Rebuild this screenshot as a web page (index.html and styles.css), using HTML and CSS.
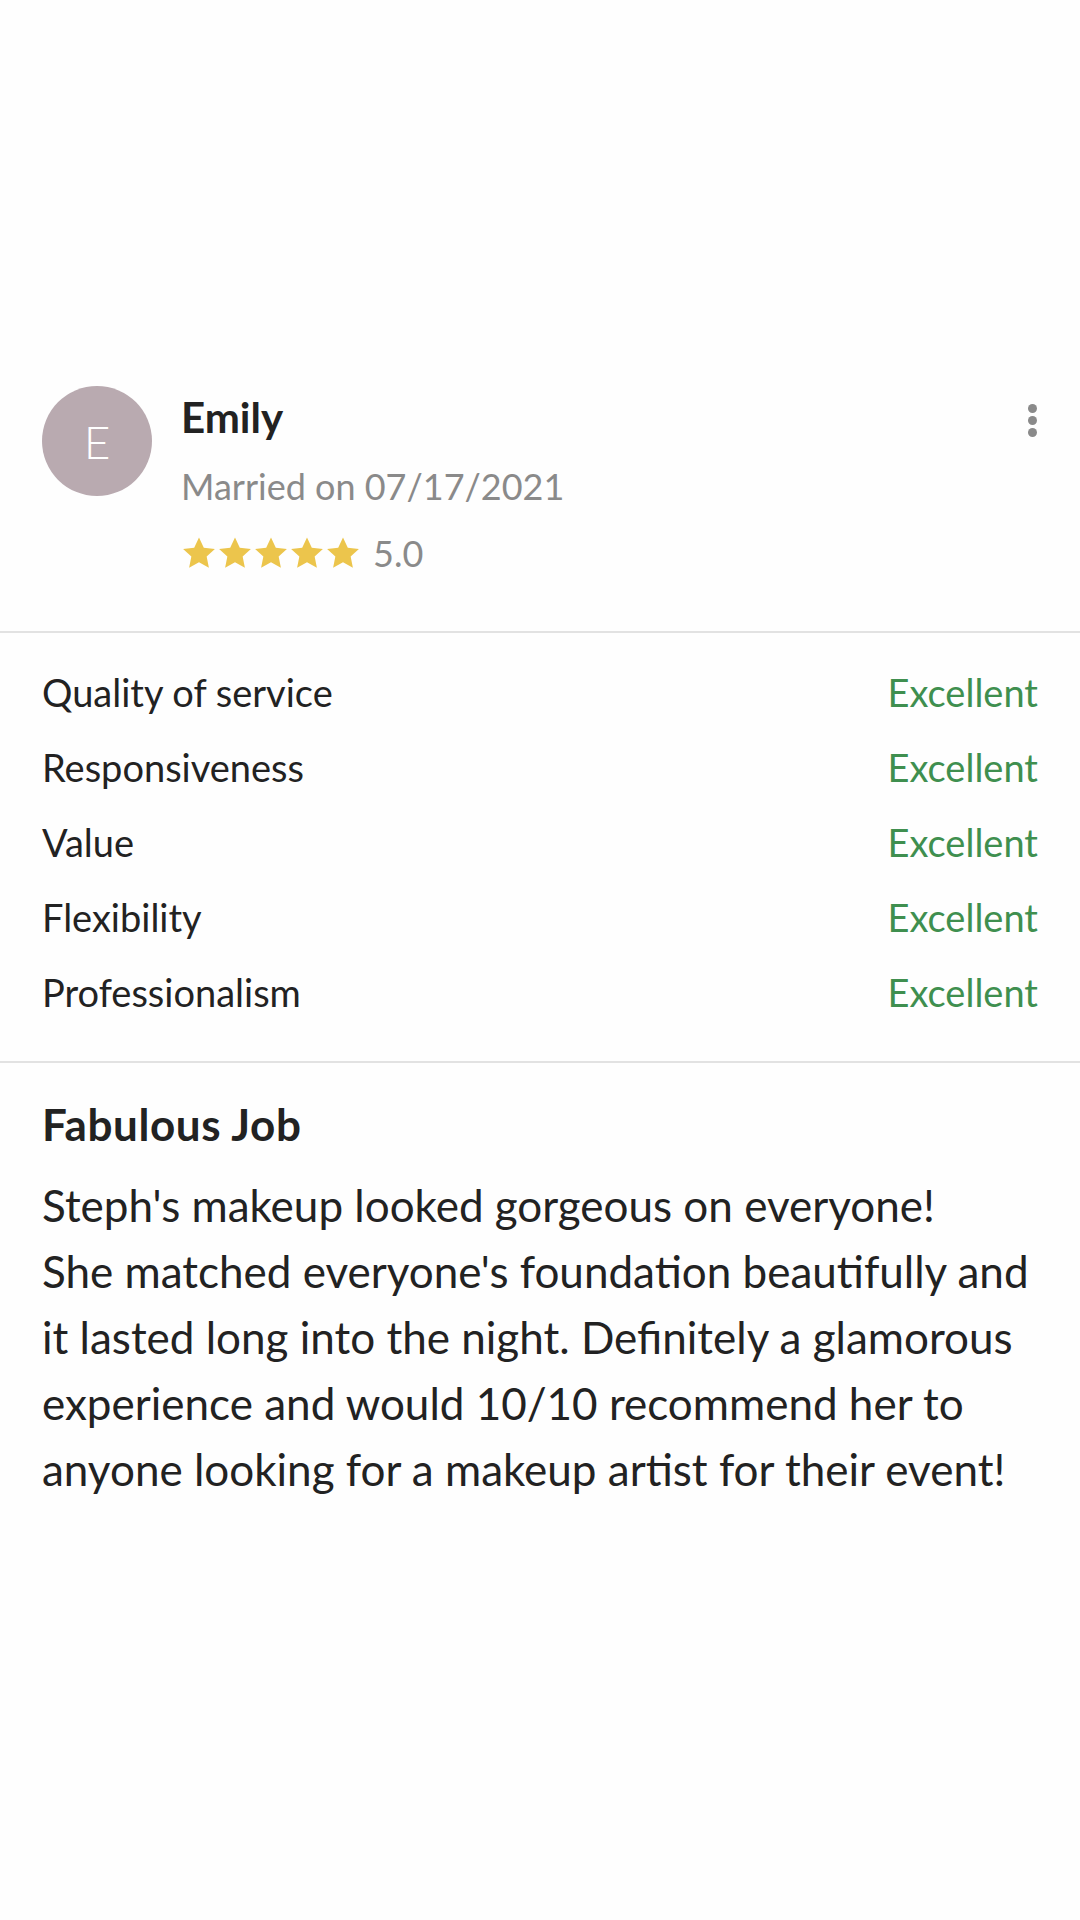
FILE: index.html
```html
<!DOCTYPE html>
<html lang="en">
<head>
<meta charset="utf-8">
<title>Review</title>
<link rel="stylesheet" href="styles.css">
</head>
<body>
<main class="review">
  <header class="reviewer">
    <div class="avatar">E</div>
    <div class="who">
      <div class="name">Emily</div>
      <div class="married">Married on 07/17/2021</div>
      <div class="rating">
        <div class="stars">
          <svg viewBox="0 0 24 24" class="star"><path d="M12 1.6l3.2 6.9 7.4.8-5.5 5.1 1.5 7.4L12 18.1 5.4 21.8l1.5-7.4L1.4 9.3l7.4-.8z"/></svg>
          <svg viewBox="0 0 24 24" class="star"><path d="M12 1.6l3.2 6.9 7.4.8-5.5 5.1 1.5 7.4L12 18.1 5.4 21.8l1.5-7.4L1.4 9.3l7.4-.8z"/></svg>
          <svg viewBox="0 0 24 24" class="star"><path d="M12 1.6l3.2 6.9 7.4.8-5.5 5.1 1.5 7.4L12 18.1 5.4 21.8l1.5-7.4L1.4 9.3l7.4-.8z"/></svg>
          <svg viewBox="0 0 24 24" class="star"><path d="M12 1.6l3.2 6.9 7.4.8-5.5 5.1 1.5 7.4L12 18.1 5.4 21.8l1.5-7.4L1.4 9.3l7.4-.8z"/></svg>
          <svg viewBox="0 0 24 24" class="star"><path d="M12 1.6l3.2 6.9 7.4.8-5.5 5.1 1.5 7.4L12 18.1 5.4 21.8l1.5-7.4L1.4 9.3l7.4-.8z"/></svg>
        </div>
        <span class="score">5.0</span>
      </div>
    </div>
    <div class="menu" aria-label="More options">
      <span class="dot"></span><span class="dot"></span><span class="dot"></span>
    </div>
  </header>

  <section class="ratings">
    <div class="row"><span class="label">Quality of service</span><span class="value">Excellent</span></div>
    <div class="row"><span class="label">Responsiveness</span><span class="value">Excellent</span></div>
    <div class="row"><span class="label">Value</span><span class="value">Excellent</span></div>
    <div class="row"><span class="label">Flexibility</span><span class="value">Excellent</span></div>
    <div class="row"><span class="label">Professionalism</span><span class="value">Excellent</span></div>
  </section>

  <section class="body">
    <h2 class="title">Fabulous Job</h2>
    <p class="text">Steph's makeup looked gorgeous on everyone!<br>She matched everyone's foundation beautifully and<br>it lasted long into the night. Definitely a glamorous<br>experience and would 10/10 recommend her to<br>anyone looking for a makeup artist for their event!</p>
  </section>
</main>
</body>
</html>
```

FILE: styles.css
```css
html, body {
  margin: 0;
  padding: 0;
  background: #fefefe;
}

body {
  width: 1080px;
  height: 1920px;
  font-family: "Lato", "Open Sans", sans-serif;
  color: #222222;
}

.review {
  display: flex;
  flex-direction: column;
  padding-top: 386px;
}

.reviewer {
  display: flex;
  align-items: flex-start;
  padding: 0 42px 0 42px;
  height: 245px;
  border-bottom: 2px solid #e2e2e2;
}

.avatar {
  flex: 0 0 110px;
  width: 110px;
  height: 110px;
  border-radius: 50%;
  background: #b9aab0;
  color: #ffffff;
  display: flex;
  align-items: center;
  justify-content: center;
  font-size: 46px;
  font-weight: 300;
}

.who {
  flex: 1;
  margin-left: 29px;
  padding-top: 6px;
  display: flex;
  flex-direction: column;
}

.name {
  font-size: 42px;
  line-height: 50px;
  font-weight: 700;
  color: #222222;
}

.married {
  margin-top: 22px;
  font-size: 36px;
  line-height: 44px;
  color: #8a8a8a;
}

.rating {
  margin-top: 25px;
  display: flex;
  align-items: center;
  gap: 12px;
}

.stars {
  display: flex;
  gap: 0;
}

.star {
  width: 36px;
  height: 36px;
  fill: #ecc54c;
}

.score {
  font-size: 36px;
  line-height: 40px;
  color: #8a8a8a;
}

.menu {
  display: flex;
  flex-direction: column;
  align-items: center;
  gap: 3px;
  padding-top: 18px;
  margin-right: 1px;
}

.dot {
  width: 9px;
  height: 9px;
  border-radius: 50%;
  background: #8a8a8a;
}

.ratings {
  display: flex;
  flex-direction: column;
  padding: 22px 42px 31px 42px;
  border-bottom: 2px solid #e2e2e2;
}

.row {
  display: flex;
  justify-content: space-between;
  font-size: 38px;
  line-height: 75px;
}

.label {
  color: #222222;
}

.value {
  color: #3f8f4f;
}

.body {
  padding: 36px 42px 0 42px;
}

.title {
  margin: 0;
  font-size: 44px;
  line-height: 50px;
  font-weight: 700;
  letter-spacing: 0.6px;
  color: #222222;
}

.text {
  margin: 23px 0 0 0;
  font-size: 44px;
  line-height: 66px;
  color: #222222;
  white-space: nowrap;
}
```
